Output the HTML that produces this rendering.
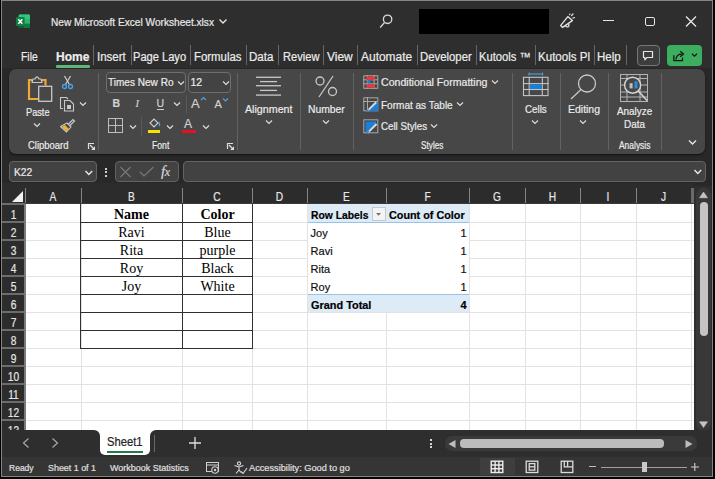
<!DOCTYPE html>
<html><head><meta charset="utf-8"><style>
html,body{margin:0;padding:0;width:715px;height:479px;overflow:hidden;background:#000}
.t{position:absolute;white-space:nowrap;-webkit-text-stroke:0.2px currentColor}
</style></head><body>
<div style="position:absolute;left:0px;top:0px;width:715px;height:479px;background:#000"></div>
<div style="position:absolute;left:1px;top:0px;width:712px;height:477px;background:#2e2e2e;box-sizing:border-box;border:1px solid #858585"></div>
<svg style="position:absolute;left:15px;top:13px;" width="17" height="17" viewBox="0 0 17 17"><rect x="3.7" y="1.5" width="11.2" height="13.6" rx="1.2" fill="#21a366"/><path d="M3.7 6 V2.7 Q3.7 1.5 4.9 1.5 H13.7 Q14.9 1.5 14.9 2.7 V6 Z" fill="#33c481"/><path d="M3.7 10.8 V13.9 Q3.7 15.1 4.9 15.1 H13.7 Q14.9 15.1 14.9 13.9 V10.8 Z" fill="#185c37"/><rect x="9" y="6" width="5.9" height="4.8" fill="#2ab573"/><path d="M9 10.8 H14.9 V13.9 Q14.9 15.1 13.7 15.1 H9 Z" fill="#107c41"/><rect x="1" y="4" width="8.6" height="9" rx="1" fill="#107c41"/><path d="M3.3 6.2 L7.3 10.8 M7.3 6.2 L3.3 10.8" stroke="#fff" stroke-width="1.5"/></svg>
<div class="t" style="left:50.6px;top:18px;font-size:10px;line-height:10px;color:#e8e8e8;font-weight:normal;font-family:'Liberation Sans', sans-serif;transform:scaleX(1.0126);transform-origin:left;">New Microsoft Excel Worksheet.xlsx</div>
<svg style="position:absolute;left:218px;top:18px;" width="10" height="7" viewBox="0 0 10 7"><polyline points="1.5,1.5 5,5 8.5,1.5" fill="none" stroke="#e6e6e6" stroke-width="1.4"/></svg>
<svg style="position:absolute;left:378px;top:13px;" width="16" height="17" viewBox="0 0 16 17"><circle cx="9.6" cy="6.3" r="4.2" fill="none" stroke="#dcdcdc" stroke-width="1.3"/><line x1="6.6" y1="9.4" x2="2.2" y2="14.5" stroke="#dcdcdc" stroke-width="1.3"/></svg>
<div style="position:absolute;left:419px;top:9px;width:130px;height:25px;background:#000"></div>
<svg style="position:absolute;left:557px;top:13px;" width="19" height="17" viewBox="0 0 19 17"><g fill="none" stroke="#e6e6e6" stroke-width="1.3" stroke-linejoin="round" stroke-linecap="round"><path d="M3.6 12.6 L10.8 3.6 L15.4 7.6 L5.6 14.4 Z"/><path d="M8.6 12.6 A1.7 1.7 0 1 0 11.6 11.2"/><line x1="14.6" y1="2.6" x2="16" y2="0.9"/><line x1="16" y1="5" x2="17.4" y2="4.6"/><line x1="12.6" y1="1.6" x2="12.8" y2="1.2"/></g></svg>
<div style="position:absolute;left:603px;top:20px;width:11px;height:1.3px;background:#e6e6e6"></div>
<div style="position:absolute;left:645px;top:16.5px;width:10px;height:9.5px;border:1.3px solid #e6e6e6;border-radius:2px;box-sizing:border-box"></div>
<svg style="position:absolute;left:685px;top:16px;" width="12" height="11" viewBox="0 0 12 11"><path d="M1 0.5 L11 10.5 M11 0.5 L1 10.5" stroke="#e6e6e6" stroke-width="1.3"/></svg>
<div class="t" style="left:21px;top:51px;font-size:12px;line-height:12px;color:#ececec;font-weight:normal;font-family:'Liberation Sans', sans-serif;transform:scaleX(0.8636);transform-origin:left;">File</div>
<div class="t" style="left:56px;top:51px;font-size:12px;line-height:12px;color:#ececec;font-weight:bold;font-family:'Liberation Sans', sans-serif;transform:scaleX(1.0018);transform-origin:left;">Home</div>
<div class="t" style="left:97px;top:51px;font-size:12px;line-height:12px;color:#ececec;font-weight:normal;font-family:'Liberation Sans', sans-serif;transform:scaleX(0.9596);transform-origin:left;">Insert</div>
<div class="t" style="left:133.4px;top:51px;font-size:12px;line-height:12px;color:#ececec;font-weight:normal;font-family:'Liberation Sans', sans-serif;transform:scaleX(0.9254);transform-origin:left;">Page Layo</div>
<div class="t" style="left:193.5px;top:51px;font-size:12px;line-height:12px;color:#ececec;font-weight:normal;font-family:'Liberation Sans', sans-serif;transform:scaleX(0.9498);transform-origin:left;">Formulas</div>
<div class="t" style="left:249.4px;top:51px;font-size:12px;line-height:12px;color:#ececec;font-weight:normal;font-family:'Liberation Sans', sans-serif;transform:scaleX(0.9626);transform-origin:left;">Data</div>
<div class="t" style="left:282.6px;top:51px;font-size:12px;line-height:12px;color:#ececec;font-weight:normal;font-family:'Liberation Sans', sans-serif;transform:scaleX(0.9251);transform-origin:left;">Review</div>
<div class="t" style="left:327.3px;top:51px;font-size:12px;line-height:12px;color:#ececec;font-weight:normal;font-family:'Liberation Sans', sans-serif;transform:scaleX(0.9963);transform-origin:left;">View</div>
<div class="t" style="left:360.9px;top:51px;font-size:12px;line-height:12px;color:#ececec;font-weight:normal;font-family:'Liberation Sans', sans-serif;transform:scaleX(0.9968);transform-origin:left;">Automate</div>
<div class="t" style="left:420px;top:51px;font-size:12px;line-height:12px;color:#ececec;font-weight:normal;font-family:'Liberation Sans', sans-serif;transform:scaleX(0.9470);transform-origin:left;">Developer</div>
<div class="t" style="left:478.8px;top:51px;font-size:12px;line-height:12px;color:#ececec;font-weight:normal;font-family:'Liberation Sans', sans-serif;transform:scaleX(0.9339);transform-origin:left;">Kutools ™</div>
<div class="t" style="left:537.9px;top:51px;font-size:12px;line-height:12px;color:#ececec;font-weight:normal;font-family:'Liberation Sans', sans-serif;transform:scaleX(0.9643);transform-origin:left;">Kutools Pl</div>
<div class="t" style="left:597.3px;top:51px;font-size:12px;line-height:12px;color:#ececec;font-weight:normal;font-family:'Liberation Sans', sans-serif;transform:scaleX(0.9603);transform-origin:left;">Help</div>
<div style="position:absolute;left:56px;top:65px;width:33.5px;height:2.5px;background:#5fb57a;border-radius:1px"></div>
<div style="position:absolute;left:92.5px;top:45px;width:1px;height:20px;background:#666"></div>
<div style="position:absolute;left:130.5px;top:45px;width:1px;height:20px;background:#666"></div>
<div style="position:absolute;left:189.5px;top:45px;width:1px;height:20px;background:#666"></div>
<div style="position:absolute;left:245.5px;top:45px;width:1px;height:20px;background:#666"></div>
<div style="position:absolute;left:277.5px;top:45px;width:1px;height:20px;background:#666"></div>
<div style="position:absolute;left:323px;top:45px;width:1px;height:20px;background:#666"></div>
<div style="position:absolute;left:356.5px;top:45px;width:1px;height:20px;background:#666"></div>
<div style="position:absolute;left:416.5px;top:45px;width:1px;height:20px;background:#666"></div>
<div style="position:absolute;left:475.5px;top:45px;width:1px;height:20px;background:#666"></div>
<div style="position:absolute;left:535px;top:45px;width:1px;height:20px;background:#666"></div>
<div style="position:absolute;left:593.5px;top:45px;width:1px;height:20px;background:#666"></div>
<div style="position:absolute;left:625.5px;top:45px;width:1px;height:20px;background:#666"></div>
<div style="position:absolute;left:637px;top:45px;width:23px;height:21px;border:1.2px solid #777;border-radius:4px;box-sizing:border-box;background:#3d3d3d"></div>
<svg style="position:absolute;left:642px;top:50px;" width="13" height="12" viewBox="0 0 13 12"><path d="M1.5 1.5 H10.5 V7.5 H5 L2.8 9.8 V7.5 H1.5 Z" fill="none" stroke="#e6e6e6" stroke-width="1.2" stroke-linejoin="round"/></svg>
<div style="position:absolute;left:666.5px;top:45px;width:35.5px;height:21px;background:#3dad5f;border-radius:4px"></div>
<svg style="position:absolute;left:672px;top:49px;" width="14" height="13" viewBox="0 0 14 13"><g fill="none" stroke="#151515" stroke-width="1.25" stroke-linejoin="round" stroke-linecap="round"><path d="M1.8 6.5 V11.5 H10.5 V9"/><path d="M4 10 C4.3 6.8 6.5 5 9.8 5"/><path d="M8.5 2.6 L11.6 5 L8.5 7.4"/></g></svg>
<svg style="position:absolute;left:691px;top:52px;" width="7" height="6" viewBox="0 0 7 6"><polyline points="1,1.8 3.5,4.2 6,1.8" fill="none" stroke="#151515" stroke-width="1.2"/></svg>
<div style="position:absolute;left:2px;top:68px;width:710px;height:118px;background:#282828"></div>
<div style="position:absolute;left:9px;top:68.5px;width:696px;height:85.5px;background:#474747;border-radius:7px;box-shadow:0 1px 2px rgba(0,0,0,0.6)"></div>
<div style="position:absolute;left:98px;top:73px;width:1px;height:77px;background:#626262"></div>
<div style="position:absolute;left:237px;top:73px;width:1px;height:77px;background:#626262"></div>
<div style="position:absolute;left:300px;top:73px;width:1px;height:77px;background:#626262"></div>
<div style="position:absolute;left:352.5px;top:73px;width:1px;height:77px;background:#626262"></div>
<div style="position:absolute;left:511.5px;top:73px;width:1px;height:77px;background:#626262"></div>
<div style="position:absolute;left:560px;top:73px;width:1px;height:77px;background:#626262"></div>
<div style="position:absolute;left:607.5px;top:73px;width:1px;height:77px;background:#626262"></div>
<div style="position:absolute;left:661px;top:73px;width:1px;height:77px;background:#626262"></div>
<svg style="position:absolute;left:26px;top:74px;" width="28" height="29" viewBox="0 0 28 29"><path d="M6.5 6 H3 V25 H12.5" fill="none" stroke="#f0a830" stroke-width="2.2"/><path d="M15.5 6 H19.5 V11.5" fill="none" stroke="#f0a830" stroke-width="2.2"/><path d="M6 8.5 L7 5 H9 Q11 0.8 13 5 H15 L16 8.5 Z" fill="#474747" stroke="#c8c8c8" stroke-width="1.2" stroke-linejoin="round"/><rect x="12.7" y="12.3" width="13" height="15" fill="#474747" stroke="#c8c8c8" stroke-width="1.3"/></svg>
<div class="t" style="left:26px;top:107px;font-size:10.5px;line-height:10.5px;color:#ebebeb;font-weight:normal;font-family:'Liberation Sans', sans-serif;transform:scaleX(0.8752);transform-origin:left;">Paste</div>
<svg style="position:absolute;left:33px;top:122px;" width="8" height="6" viewBox="0 0 8 6"><polyline points="1,1.5 4,4.5 7,1.5" fill="none" stroke="#dcdcdc" stroke-width="1.2"/></svg>
<svg style="position:absolute;left:61px;top:75px;" width="13" height="15" viewBox="0 0 13 15"><line x1="3.5" y1="1" x2="8.5" y2="9.5" stroke="#d8d8d8" stroke-width="1.1"/><line x1="9.5" y1="1" x2="4.5" y2="9.5" stroke="#d8d8d8" stroke-width="1.1"/><circle cx="3.5" cy="11.5" r="2" fill="none" stroke="#4aa3e8" stroke-width="1.3"/><circle cx="9.5" cy="11.5" r="2" fill="none" stroke="#4aa3e8" stroke-width="1.3"/></svg>
<svg style="position:absolute;left:59px;top:96px;" width="17" height="16" viewBox="0 0 17 16"><path d="M4 12.5 H1.5 V1.5 H7.5 L9 3" fill="none" stroke="#c8c8c8" stroke-width="1.1"/><path d="M5.5 4.5 H11 L14.5 8 V15 H5.5 Z" fill="none" stroke="#c8c8c8" stroke-width="1.1"/><rect x="8" y="9" width="4" height="4" fill="#c8c8c8"/></svg>
<svg style="position:absolute;left:79px;top:101px;" width="8" height="6" viewBox="0 0 8 6"><polyline points="1,1.5 4,4.5 7,1.5" fill="none" stroke="#dcdcdc" stroke-width="1.2"/></svg>
<svg style="position:absolute;left:59px;top:118px;" width="17" height="15" viewBox="0 0 17 15"><path d="M9.5 6 L14 1.5 L15.5 3 L11 7.5" fill="none" stroke="#c8c8c8" stroke-width="1.2"/><path d="M1.5 8.5 L8 5 L12 9 L7.5 14 Z" fill="none" stroke="#c8c8c8" stroke-width="1.1" stroke-linejoin="round"/><path d="M2.5 9 L6 7 L10.5 11.5 L7.5 13 Z" fill="#f0b030"/></svg>
<div class="t" style="left:27.7px;top:141px;font-size:10px;line-height:10px;color:#ebebeb;font-weight:normal;font-family:'Liberation Sans', sans-serif;transform:scaleX(0.9462);transform-origin:left;">Clipboard</div>
<svg style="position:absolute;left:87px;top:142px;" width="9" height="9" viewBox="0 0 9 9"><path d="M1.5 7 V1.5 H7" fill="none" stroke="#e0e0e0" stroke-width="1.2"/><line x1="3" y1="3" x2="6.5" y2="6.5" stroke="#e0e0e0" stroke-width="1.2"/><polygon points="8,4.2 8,8 4.2,8" fill="#e0e0e0"/></svg>
<div style="position:absolute;left:105.5px;top:71.5px;width:80.5px;height:21px;border:1px solid #6e6e6e;border-radius:4px;box-sizing:border-box;background:#434343"></div>
<div class="t" style="left:108px;top:77px;font-size:10.5px;line-height:10.5px;color:#ebebeb;font-weight:normal;font-family:'Liberation Sans', sans-serif;transform:scaleX(0.9568);transform-origin:left;">Times New Ro</div>
<svg style="position:absolute;left:177px;top:79.5px;" width="8" height="6" viewBox="0 0 8 6"><polyline points="1,1.5 4,4.5 7,1.5" fill="none" stroke="#dcdcdc" stroke-width="1.2"/></svg>
<div style="position:absolute;left:188px;top:71.5px;width:43px;height:21px;border:1px solid #6e6e6e;border-radius:4px;box-sizing:border-box;background:#434343"></div>
<div class="t" style="left:190.5px;top:77px;font-size:10.5px;line-height:10.5px;color:#ebebeb;font-weight:normal;font-family:'Liberation Sans', sans-serif;">12</div>
<svg style="position:absolute;left:221.5px;top:79.5px;" width="8" height="6" viewBox="0 0 8 6"><polyline points="1,1.5 4,4.5 7,1.5" fill="none" stroke="#dcdcdc" stroke-width="1.2"/></svg>
<div class="t" style="left:112.5px;top:98px;font-size:10.5px;line-height:10.5px;color:#d0d0d0;font-weight:bold;font-family:'Liberation Sans', sans-serif;">B</div>
<div class="t" style="left:135.5px;top:99px;font-size:10.5px;line-height:10.5px;color:#d0d0d0;font-weight:normal;font-family:'Liberation Serif', serif;font-style:italic;">I</div>
<div class="t" style="left:156.5px;top:98px;font-size:10.5px;line-height:10.5px;color:#d0d0d0;font-weight:normal;font-family:'Liberation Sans', sans-serif;">U</div>
<div style="position:absolute;left:156.5px;top:109px;width:7.5px;height:1px;background:#d0d0d0"></div>
<svg style="position:absolute;left:172.5px;top:101px;" width="8" height="6" viewBox="0 0 8 6"><polyline points="1,1.5 4,4.5 7,1.5" fill="none" stroke="#dcdcdc" stroke-width="1.2"/></svg>
<div style="position:absolute;left:185.5px;top:94.5px;width:1px;height:19.5px;background:#5a5a5a"></div>
<div class="t" style="left:191px;top:97px;font-size:13px;line-height:13px;color:#d0d0d0;font-weight:normal;font-family:'Liberation Sans', sans-serif;font-weight:normal;">A</div>
<svg style="position:absolute;left:200px;top:96px;" width="7" height="5" viewBox="0 0 7 5"><polyline points="1,4 3.5,1.5 6,4" fill="none" stroke="#4aa3e8" stroke-width="1.2"/></svg>
<div class="t" style="left:214.5px;top:99px;font-size:11px;line-height:11px;color:#d0d0d0;font-weight:normal;font-family:'Liberation Sans', sans-serif;">A</div>
<svg style="position:absolute;left:222px;top:97px;" width="7" height="5" viewBox="0 0 7 5"><polyline points="1,1.5 3.5,4 6,1.5" fill="none" stroke="#4aa3e8" stroke-width="1.2"/></svg>
<svg style="position:absolute;left:108px;top:118px;" width="15" height="15" viewBox="0 0 15 15"><rect x="0.5" y="0.5" width="14" height="14" fill="none" stroke="#bdbdbd" stroke-width="1"/><line x1="7.5" y1="0" x2="7.5" y2="15" stroke="#bdbdbd"/><line x1="0" y1="7.5" x2="15" y2="7.5" stroke="#bdbdbd"/></svg>
<svg style="position:absolute;left:128.5px;top:124px;" width="8" height="6" viewBox="0 0 8 6"><polyline points="1,1.5 4,4.5 7,1.5" fill="none" stroke="#dcdcdc" stroke-width="1.2"/></svg>
<div style="position:absolute;left:141px;top:116.5px;width:1px;height:19px;background:#5a5a5a"></div>
<svg style="position:absolute;left:147px;top:117px;" width="15" height="13" viewBox="0 0 15 13"><path d="M3 6 L7 2 L11 6 L7 10 Z" fill="none" stroke="#d0d0d0" stroke-width="1.1"/><path d="M11.5 5 Q13.5 8 12 9" fill="none" stroke="#4aa3e8" stroke-width="1.4"/></svg>
<div style="position:absolute;left:148px;top:129.5px;width:12px;height:3px;background:#f5e400"></div>
<svg style="position:absolute;left:166px;top:124px;" width="8" height="6" viewBox="0 0 8 6"><polyline points="1,1.5 4,4.5 7,1.5" fill="none" stroke="#dcdcdc" stroke-width="1.2"/></svg>
<div class="t" style="left:184px;top:118px;font-size:12px;line-height:12px;color:#d0d0d0;font-weight:normal;font-family:'Liberation Sans', sans-serif;">A</div>
<div style="position:absolute;left:182px;top:129.5px;width:14px;height:3px;background:#e81123"></div>
<svg style="position:absolute;left:202px;top:124px;" width="8" height="6" viewBox="0 0 8 6"><polyline points="1,1.5 4,4.5 7,1.5" fill="none" stroke="#dcdcdc" stroke-width="1.2"/></svg>
<div class="t" style="left:152px;top:141px;font-size:10px;line-height:10px;color:#ebebeb;font-weight:normal;font-family:'Liberation Sans', sans-serif;transform:scaleX(0.8646);transform-origin:left;">Font</div>
<svg style="position:absolute;left:226px;top:142px;" width="9" height="9" viewBox="0 0 9 9"><path d="M1.5 7 V1.5 H7" fill="none" stroke="#e0e0e0" stroke-width="1.2"/><line x1="3" y1="3" x2="6.5" y2="6.5" stroke="#e0e0e0" stroke-width="1.2"/><polygon points="8,4.2 8,8 4.2,8" fill="#e0e0e0"/></svg>
<svg style="position:absolute;left:255px;top:76px;" width="28" height="21" viewBox="0 0 28 21"><g stroke="#c8c8c8" stroke-width="1.3"><line x1="1" y1="1.3" x2="26" y2="1.3"/><line x1="5" y1="5.6" x2="22" y2="5.6"/><line x1="1" y1="9.7" x2="26" y2="9.7"/><line x1="5" y1="14.4" x2="22" y2="14.4"/><line x1="1" y1="19.1" x2="26" y2="19.1"/></g></svg>
<div class="t" style="left:244.5px;top:104px;font-size:11px;line-height:11px;color:#ebebeb;font-weight:normal;font-family:'Liberation Sans', sans-serif;transform:scaleX(0.9710);transform-origin:left;">Alignment</div>
<svg style="position:absolute;left:264.5px;top:119px;" width="8" height="6" viewBox="0 0 8 6"><polyline points="1,1.5 4,4.5 7,1.5" fill="none" stroke="#dcdcdc" stroke-width="1.2"/></svg>
<svg style="position:absolute;left:314px;top:75px;" width="25" height="23" viewBox="0 0 25 23"><circle cx="6" cy="6" r="4" fill="none" stroke="#c8c8c8" stroke-width="1.3"/><circle cx="18.5" cy="16.5" r="4" fill="none" stroke="#c8c8c8" stroke-width="1.3"/><line x1="19" y1="1" x2="5" y2="22" stroke="#c8c8c8" stroke-width="1.3"/></svg>
<div class="t" style="left:307.7px;top:104px;font-size:11px;line-height:11px;color:#ebebeb;font-weight:normal;font-family:'Liberation Sans', sans-serif;transform:scaleX(0.9406);transform-origin:left;">Number</div>
<svg style="position:absolute;left:322px;top:119px;" width="8" height="6" viewBox="0 0 8 6"><polyline points="1,1.5 4,4.5 7,1.5" fill="none" stroke="#dcdcdc" stroke-width="1.2"/></svg>
<svg style="position:absolute;left:363px;top:75px;" width="16" height="14" viewBox="0 0 16 14"><g stroke="#a8a8a8" stroke-width="1" fill="none"><rect x="0.8" y="0.8" width="14" height="12.5"/><line x1="4.3" y1="0" x2="4.3" y2="14"/><line x1="11" y1="0" x2="11" y2="14"/><line x1="0" y1="4.8" x2="15" y2="4.8"/><line x1="0" y1="8.8" x2="15" y2="8.8"/></g><rect x="3.5" y="1.5" width="8" height="3.5" fill="#e8383d"/><rect x="3.5" y="9.2" width="8" height="3.6" fill="#e8383d"/><rect x="4.5" y="5.3" width="3" height="3" fill="#1a7fd8"/></svg>
<div class="t" style="left:381px;top:77px;font-size:10.5px;line-height:10.5px;color:#ebebeb;font-weight:normal;font-family:'Liberation Sans', sans-serif;transform:scaleX(1.0072);transform-origin:left;">Conditional Formatting</div>
<svg style="position:absolute;left:490.5px;top:79px;" width="8" height="6" viewBox="0 0 8 6"><polyline points="1,1.5 4,4.5 7,1.5" fill="none" stroke="#dcdcdc" stroke-width="1.2"/></svg>
<svg style="position:absolute;left:363px;top:97px;" width="16" height="15" viewBox="0 0 16 15"><g stroke="#a8a8a8" stroke-width="1" fill="none"><rect x="0.8" y="0.8" width="14" height="13"/><line x1="0" y1="4.5" x2="15" y2="4.5"/><line x1="4.5" y1="0" x2="4.5" y2="14"/></g><path d="M5 14 L15 4.5 V14 Z" fill="#1a7fd8"/><path d="M3.5 13.5 L12.5 4.5 L14 6 L5 14.5 Z" fill="#d8d8d8"/><path d="M3.5 13.5 L5 12 L6 13 L4.5 14.5 Z" fill="#1a7fd8"/></svg>
<div class="t" style="left:381px;top:100px;font-size:10.5px;line-height:10.5px;color:#ebebeb;font-weight:normal;font-family:'Liberation Sans', sans-serif;transform:scaleX(0.9548);transform-origin:left;">Format as Table</div>
<svg style="position:absolute;left:456px;top:101px;" width="8" height="6" viewBox="0 0 8 6"><polyline points="1,1.5 4,4.5 7,1.5" fill="none" stroke="#dcdcdc" stroke-width="1.2"/></svg>
<svg style="position:absolute;left:363px;top:119px;" width="16" height="15" viewBox="0 0 16 15"><g stroke="#a8a8a8" stroke-width="1" fill="none"><rect x="0.8" y="0.8" width="14" height="13"/></g><path d="M2.5 2.5 H13 V5 L4 13 H2.5 Z" fill="#1a7fd8"/><path d="M3.8 13.3 L12.8 4.3 L14.3 5.8 L5.3 14.5 Z" fill="#d8d8d8"/><path d="M3.8 13.3 L5.3 11.8 L6.3 12.8 L4.8 14.3 Z" fill="#1a7fd8"/></svg>
<div class="t" style="left:381px;top:121px;font-size:10.5px;line-height:10.5px;color:#ebebeb;font-weight:normal;font-family:'Liberation Sans', sans-serif;transform:scaleX(0.9274);transform-origin:left;">Cell Styles</div>
<svg style="position:absolute;left:430px;top:123px;" width="8" height="6" viewBox="0 0 8 6"><polyline points="1,1.5 4,4.5 7,1.5" fill="none" stroke="#dcdcdc" stroke-width="1.2"/></svg>
<div class="t" style="left:421px;top:141px;font-size:10px;line-height:10px;color:#ebebeb;font-weight:normal;font-family:'Liberation Sans', sans-serif;transform:scaleX(0.8226);transform-origin:left;">Styles</div>
<svg style="position:absolute;left:522px;top:72px;" width="28" height="25" viewBox="0 0 28 25"><g stroke="#4aa3e8" stroke-width="1.1"><line x1="7" y1="2" x2="20.5" y2="2"/><line x1="7" y1="0.5" x2="7" y2="3.5"/><line x1="20.5" y1="0.5" x2="20.5" y2="3.5"/></g><g stroke="#c4c4c4" stroke-width="1.1" fill="none"><rect x="1.5" y="5.3" width="24.5" height="18.3"/><line x1="1" y1="11.6" x2="26.5" y2="11.6"/><line x1="1" y1="17.5" x2="26.5" y2="17.5"/><line x1="7.2" y1="5" x2="7.2" y2="24"/><line x1="20.3" y1="5" x2="20.3" y2="24"/></g><rect x="7.8" y="12.2" width="11.9" height="4.8" fill="#1a7fd8"/></svg>
<div class="t" style="left:525px;top:104px;font-size:10.5px;line-height:10.5px;color:#ebebeb;font-weight:normal;font-family:'Liberation Sans', sans-serif;transform:scaleX(0.9298);transform-origin:left;">Cells</div>
<svg style="position:absolute;left:531px;top:119px;" width="8" height="6" viewBox="0 0 8 6"><polyline points="1,1.5 4,4.5 7,1.5" fill="none" stroke="#dcdcdc" stroke-width="1.2"/></svg>
<svg style="position:absolute;left:569px;top:73px;" width="30" height="28" viewBox="0 0 30 28"><circle cx="18" cy="10.5" r="8.5" fill="none" stroke="#c8c8c8" stroke-width="1.3"/><line x1="12" y1="16.5" x2="2" y2="26" stroke="#c8c8c8" stroke-width="1.3"/></svg>
<div class="t" style="left:567.6px;top:104px;font-size:10.5px;line-height:10.5px;color:#ebebeb;font-weight:normal;font-family:'Liberation Sans', sans-serif;transform:scaleX(0.9967);transform-origin:left;">Editing</div>
<svg style="position:absolute;left:579px;top:119px;" width="8" height="6" viewBox="0 0 8 6"><polyline points="1,1.5 4,4.5 7,1.5" fill="none" stroke="#dcdcdc" stroke-width="1.2"/></svg>
<svg style="position:absolute;left:619px;top:73px;" width="31" height="30" viewBox="0 0 31 30"><g stroke="#b4b4b4" stroke-width="1" fill="none"><rect x="1.5" y="1.5" width="27" height="27"/><line x1="1" y1="5.5" x2="29" y2="5.5"/><line x1="1" y1="12" x2="29" y2="12"/><line x1="1" y1="19" x2="29" y2="19"/><line x1="1" y1="24" x2="29" y2="24"/><line x1="8" y1="1" x2="8" y2="29"/><line x1="21" y1="1" x2="21" y2="29"/></g><circle cx="13.6" cy="12.2" r="8" fill="#474747" stroke="#d6d6d6" stroke-width="1.4"/><line x1="19.3" y1="17.9" x2="28" y2="27.5" stroke="#d6d6d6" stroke-width="1.5"/><rect x="10.6" y="10.2" width="3" height="5.2" fill="#c0c0c0"/><rect x="15.5" y="8.2" width="3" height="7.2" fill="#2f8de0"/></svg>
<div class="t" style="left:616.6px;top:106px;font-size:10.5px;line-height:10.5px;color:#ebebeb;font-weight:normal;font-family:'Liberation Sans', sans-serif;transform:scaleX(0.9423);transform-origin:left;">Analyze</div>
<div class="t" style="left:624px;top:119px;font-size:10.5px;line-height:10.5px;color:#ebebeb;font-weight:normal;font-family:'Liberation Sans', sans-serif;transform:scaleX(0.9468);transform-origin:left;">Data</div>
<div class="t" style="left:619px;top:141px;font-size:10px;line-height:10px;color:#ebebeb;font-weight:normal;font-family:'Liberation Sans', sans-serif;transform:scaleX(0.8432);transform-origin:left;">Analysis</div>
<svg style="position:absolute;left:688px;top:139px;" width="10" height="7" viewBox="0 0 10 7"><polyline points="1,1.5 4.5,5 8,1.5" fill="none" stroke="#e6e6e6" stroke-width="1.4"/></svg>
<div style="position:absolute;left:9px;top:161px;width:88px;height:21px;border:1.5px solid #636363;border-radius:4px;box-sizing:border-box;background:#424242"></div>
<div class="t" style="left:14px;top:167px;font-size:10.5px;line-height:10.5px;color:#ebebeb;font-weight:normal;font-family:'Liberation Sans', sans-serif;transform:scaleX(0.9741);transform-origin:left;">K22</div>
<svg style="position:absolute;left:83.5px;top:168.5px;" width="10" height="8" viewBox="0 0 10 8"><polyline points="1.5,2 4.8,5.5 8.2,2" fill="none" stroke="#e6e6e6" stroke-width="1.5"/></svg>
<div style="position:absolute;left:104.8px;top:167.5px;width:2px;height:2px;background:#cfcfcf"></div>
<div style="position:absolute;left:104.8px;top:171px;width:2px;height:2px;background:#cfcfcf"></div>
<div style="position:absolute;left:104.8px;top:174.5px;width:2px;height:2px;background:#cfcfcf"></div>
<div style="position:absolute;left:114.5px;top:161px;width:64px;height:21px;border:1.5px solid #636363;border-radius:4px;box-sizing:border-box;background:#424242"></div>
<svg style="position:absolute;left:119px;top:166px;" width="14" height="12" viewBox="0 0 14 12"><path d="M1.5 1 L11.5 11 M11.5 1 L1.5 11" stroke="#7a7a7a" stroke-width="1.1"/></svg>
<svg style="position:absolute;left:139px;top:166px;" width="16" height="12" viewBox="0 0 16 12"><polyline points="1,6 5,10 14.5,1" fill="none" stroke="#7a7a7a" stroke-width="1.1"/></svg>
<div class="t" style="left:161px;top:164px;font-size:15px;line-height:15px;color:#d6d6d6;font-weight:normal;font-family:'Liberation Serif', serif;font-style:italic;letter-spacing:-0.5px;">f<span style="font-size:12px">x</span></div>
<div style="position:absolute;left:182.5px;top:161px;width:523px;height:21px;border:1.5px solid #636363;border-radius:4px;box-sizing:border-box;background:#424242"></div>
<svg style="position:absolute;left:692.5px;top:167.5px;" width="10" height="8" viewBox="0 0 10 8"><polyline points="1.5,2 4.8,5.5 8.2,2" fill="none" stroke="#e6e6e6" stroke-width="1.5"/></svg>
<div style="position:absolute;left:2px;top:183px;width:692px;height:21px;background:#2c2c2c"></div>
<div style="position:absolute;left:2px;top:204px;width:23px;height:226px;background:#2c2c2c"></div>
<div style="position:absolute;left:25px;top:204px;width:669px;height:226px;background:#fff"></div>
<div style="position:absolute;left:25px;top:222px;width:669px;height:1px;background:#e2e2e2"></div>
<div style="position:absolute;left:25px;top:240px;width:669px;height:1px;background:#e2e2e2"></div>
<div style="position:absolute;left:25px;top:258px;width:669px;height:1px;background:#e2e2e2"></div>
<div style="position:absolute;left:25px;top:276px;width:669px;height:1px;background:#e2e2e2"></div>
<div style="position:absolute;left:25px;top:294px;width:669px;height:1px;background:#e2e2e2"></div>
<div style="position:absolute;left:25px;top:312px;width:669px;height:1px;background:#e2e2e2"></div>
<div style="position:absolute;left:25px;top:330px;width:669px;height:1px;background:#e2e2e2"></div>
<div style="position:absolute;left:25px;top:348px;width:669px;height:1px;background:#e2e2e2"></div>
<div style="position:absolute;left:25px;top:366px;width:669px;height:1px;background:#e2e2e2"></div>
<div style="position:absolute;left:25px;top:384px;width:669px;height:1px;background:#e2e2e2"></div>
<div style="position:absolute;left:25px;top:402px;width:669px;height:1px;background:#e2e2e2"></div>
<div style="position:absolute;left:25px;top:420px;width:669px;height:1px;background:#e2e2e2"></div>
<div style="position:absolute;left:81px;top:204px;width:1px;height:226px;background:#e2e2e2"></div>
<div style="position:absolute;left:182px;top:204px;width:1px;height:226px;background:#e2e2e2"></div>
<div style="position:absolute;left:252px;top:204px;width:1px;height:226px;background:#e2e2e2"></div>
<div style="position:absolute;left:307px;top:204px;width:1px;height:226px;background:#e2e2e2"></div>
<div style="position:absolute;left:386px;top:204px;width:1px;height:226px;background:#e2e2e2"></div>
<div style="position:absolute;left:469px;top:204px;width:1px;height:226px;background:#e2e2e2"></div>
<div style="position:absolute;left:525px;top:204px;width:1px;height:226px;background:#e2e2e2"></div>
<div style="position:absolute;left:580px;top:204px;width:1px;height:226px;background:#e2e2e2"></div>
<div style="position:absolute;left:636px;top:204px;width:1px;height:226px;background:#e2e2e2"></div>
<div style="position:absolute;left:691px;top:204px;width:1px;height:226px;background:#e2e2e2"></div>
<div style="position:absolute;left:25px;top:188px;width:1px;height:16px;background:#858585"></div>
<div style="position:absolute;left:81px;top:188px;width:1px;height:16px;background:#858585"></div>
<div style="position:absolute;left:182px;top:188px;width:1px;height:16px;background:#858585"></div>
<div style="position:absolute;left:252px;top:188px;width:1px;height:16px;background:#858585"></div>
<div style="position:absolute;left:307px;top:188px;width:1px;height:16px;background:#858585"></div>
<div style="position:absolute;left:386px;top:188px;width:1px;height:16px;background:#858585"></div>
<div style="position:absolute;left:469px;top:188px;width:1px;height:16px;background:#858585"></div>
<div style="position:absolute;left:525px;top:188px;width:1px;height:16px;background:#858585"></div>
<div style="position:absolute;left:580px;top:188px;width:1px;height:16px;background:#858585"></div>
<div style="position:absolute;left:636px;top:188px;width:1px;height:16px;background:#858585"></div>
<div style="position:absolute;left:691px;top:188px;width:1px;height:16px;background:#858585"></div>
<div style="position:absolute;left:691px;top:188px;width:3px;height:16px;background:#6a6a6a"></div>
<div style="position:absolute;left:25px;top:203px;width:669px;height:1px;background:#3a3a3a"></div>
<div style="position:absolute;left:2px;top:203px;width:23px;height:2px;background:#6c6c6c"></div>
<div style="position:absolute;left:2px;top:221px;width:23px;height:2px;background:#6c6c6c"></div>
<div style="position:absolute;left:2px;top:239px;width:23px;height:2px;background:#6c6c6c"></div>
<div style="position:absolute;left:2px;top:257px;width:23px;height:2px;background:#6c6c6c"></div>
<div style="position:absolute;left:2px;top:275px;width:23px;height:2px;background:#6c6c6c"></div>
<div style="position:absolute;left:2px;top:293px;width:23px;height:2px;background:#6c6c6c"></div>
<div style="position:absolute;left:2px;top:311px;width:23px;height:2px;background:#6c6c6c"></div>
<div style="position:absolute;left:2px;top:329px;width:23px;height:2px;background:#6c6c6c"></div>
<div style="position:absolute;left:2px;top:347px;width:23px;height:2px;background:#6c6c6c"></div>
<div style="position:absolute;left:2px;top:365px;width:23px;height:2px;background:#6c6c6c"></div>
<div style="position:absolute;left:2px;top:383px;width:23px;height:2px;background:#6c6c6c"></div>
<div style="position:absolute;left:2px;top:401px;width:23px;height:2px;background:#6c6c6c"></div>
<div style="position:absolute;left:2px;top:419px;width:23px;height:2px;background:#6c6c6c"></div>
<div style="position:absolute;left:24px;top:204px;width:1.5px;height:226px;background:#7a7a7a"></div>
<svg style="position:absolute;left:11px;top:190px;" width="13" height="13" viewBox="0 0 13 13"><polygon points="12,1 12,12 1,12" fill="#f2f2f2"/></svg>
<div class="t" style="left:24.5px;width:56px;text-align:center;top:191px;font-size:12px;line-height:12px;color:#e6e6e6;font-weight:normal;font-family:'Liberation Sans', sans-serif;transform:scaleX(0.8500);transform-origin:center;">A</div>
<div class="t" style="left:80.5px;width:101px;text-align:center;top:191px;font-size:12px;line-height:12px;color:#e6e6e6;font-weight:normal;font-family:'Liberation Sans', sans-serif;transform:scaleX(0.8500);transform-origin:center;">B</div>
<div class="t" style="left:181.5px;width:70px;text-align:center;top:191px;font-size:12px;line-height:12px;color:#e6e6e6;font-weight:normal;font-family:'Liberation Sans', sans-serif;transform:scaleX(0.8500);transform-origin:center;">C</div>
<div class="t" style="left:251.5px;width:55px;text-align:center;top:191px;font-size:12px;line-height:12px;color:#e6e6e6;font-weight:normal;font-family:'Liberation Sans', sans-serif;transform:scaleX(0.8500);transform-origin:center;">D</div>
<div class="t" style="left:306.5px;width:79px;text-align:center;top:191px;font-size:12px;line-height:12px;color:#e6e6e6;font-weight:normal;font-family:'Liberation Sans', sans-serif;transform:scaleX(0.8500);transform-origin:center;">E</div>
<div class="t" style="left:385.5px;width:83px;text-align:center;top:191px;font-size:12px;line-height:12px;color:#e6e6e6;font-weight:normal;font-family:'Liberation Sans', sans-serif;transform:scaleX(0.8500);transform-origin:center;">F</div>
<div class="t" style="left:468.5px;width:56px;text-align:center;top:191px;font-size:12px;line-height:12px;color:#e6e6e6;font-weight:normal;font-family:'Liberation Sans', sans-serif;transform:scaleX(0.8500);transform-origin:center;">G</div>
<div class="t" style="left:524.5px;width:55px;text-align:center;top:191px;font-size:12px;line-height:12px;color:#e6e6e6;font-weight:normal;font-family:'Liberation Sans', sans-serif;transform:scaleX(0.8500);transform-origin:center;">H</div>
<div class="t" style="left:579.5px;width:56px;text-align:center;top:191px;font-size:12px;line-height:12px;color:#e6e6e6;font-weight:normal;font-family:'Liberation Sans', sans-serif;transform:scaleX(0.8500);transform-origin:center;">I</div>
<div class="t" style="left:635.5px;width:55px;text-align:center;top:191px;font-size:12px;line-height:12px;color:#e6e6e6;font-weight:normal;font-family:'Liberation Sans', sans-serif;transform:scaleX(0.8500);transform-origin:center;">J</div>
<div class="t" style="left:2.0px;width:23px;text-align:center;top:209px;font-size:12px;line-height:12px;color:#e6e6e6;font-weight:normal;font-family:'Liberation Sans', sans-serif;transform:scaleX(0.8500);transform-origin:center;">1</div>
<div class="t" style="left:2.0px;width:23px;text-align:center;top:227px;font-size:12px;line-height:12px;color:#e6e6e6;font-weight:normal;font-family:'Liberation Sans', sans-serif;transform:scaleX(0.8500);transform-origin:center;">2</div>
<div class="t" style="left:2.0px;width:23px;text-align:center;top:245px;font-size:12px;line-height:12px;color:#e6e6e6;font-weight:normal;font-family:'Liberation Sans', sans-serif;transform:scaleX(0.8500);transform-origin:center;">3</div>
<div class="t" style="left:2.0px;width:23px;text-align:center;top:263px;font-size:12px;line-height:12px;color:#e6e6e6;font-weight:normal;font-family:'Liberation Sans', sans-serif;transform:scaleX(0.8500);transform-origin:center;">4</div>
<div class="t" style="left:2.0px;width:23px;text-align:center;top:281px;font-size:12px;line-height:12px;color:#e6e6e6;font-weight:normal;font-family:'Liberation Sans', sans-serif;transform:scaleX(0.8500);transform-origin:center;">5</div>
<div class="t" style="left:2.0px;width:23px;text-align:center;top:299px;font-size:12px;line-height:12px;color:#e6e6e6;font-weight:normal;font-family:'Liberation Sans', sans-serif;transform:scaleX(0.8500);transform-origin:center;">6</div>
<div class="t" style="left:2.0px;width:23px;text-align:center;top:317px;font-size:12px;line-height:12px;color:#e6e6e6;font-weight:normal;font-family:'Liberation Sans', sans-serif;transform:scaleX(0.8500);transform-origin:center;">7</div>
<div class="t" style="left:2.0px;width:23px;text-align:center;top:335px;font-size:12px;line-height:12px;color:#e6e6e6;font-weight:normal;font-family:'Liberation Sans', sans-serif;transform:scaleX(0.8500);transform-origin:center;">8</div>
<div class="t" style="left:2.0px;width:23px;text-align:center;top:353px;font-size:12px;line-height:12px;color:#e6e6e6;font-weight:normal;font-family:'Liberation Sans', sans-serif;transform:scaleX(0.8500);transform-origin:center;">9</div>
<div class="t" style="left:2.0px;width:23px;text-align:center;top:371px;font-size:12px;line-height:12px;color:#e6e6e6;font-weight:normal;font-family:'Liberation Sans', sans-serif;transform:scaleX(0.8500);transform-origin:center;">10</div>
<div class="t" style="left:2.0px;width:23px;text-align:center;top:389px;font-size:12px;line-height:12px;color:#e6e6e6;font-weight:normal;font-family:'Liberation Sans', sans-serif;transform:scaleX(0.8500);transform-origin:center;">11</div>
<div class="t" style="left:2.0px;width:23px;text-align:center;top:407px;font-size:12px;line-height:12px;color:#e6e6e6;font-weight:normal;font-family:'Liberation Sans', sans-serif;transform:scaleX(0.8500);transform-origin:center;">12</div>
<div class="t" style="left:2.0px;width:23px;text-align:center;top:425px;font-size:12px;line-height:12px;color:#e6e6e6;font-weight:normal;font-family:'Liberation Sans', sans-serif;transform:scaleX(0.8500);transform-origin:center;">13</div>
<div style="position:absolute;left:80px;top:222px;width:173px;height:1px;background:#303030"></div>
<div style="position:absolute;left:80px;top:240px;width:173px;height:1px;background:#303030"></div>
<div style="position:absolute;left:80px;top:258px;width:173px;height:1px;background:#303030"></div>
<div style="position:absolute;left:80px;top:276px;width:173px;height:1px;background:#303030"></div>
<div style="position:absolute;left:80px;top:294px;width:173px;height:1px;background:#303030"></div>
<div style="position:absolute;left:80px;top:312px;width:173px;height:1px;background:#303030"></div>
<div style="position:absolute;left:80px;top:330px;width:173px;height:1px;background:#303030"></div>
<div style="position:absolute;left:80px;top:348px;width:173px;height:1px;background:#303030"></div>
<div style="position:absolute;left:80px;top:204px;width:1px;height:145px;background:#303030"></div>
<div style="position:absolute;left:182px;top:204px;width:1px;height:145px;background:#303030"></div>
<div style="position:absolute;left:252px;top:204px;width:1px;height:145px;background:#303030"></div>
<div class="t" style="left:81.0px;width:101px;text-align:center;top:208px;font-size:14px;line-height:14px;color:#000;font-weight:bold;font-family:'Liberation Serif', serif;-webkit-text-stroke:0;">Name</div>
<div class="t" style="left:182.5px;width:70px;text-align:center;top:208px;font-size:14px;line-height:14px;color:#000;font-weight:bold;font-family:'Liberation Serif', serif;-webkit-text-stroke:0;">Color</div>
<div class="t" style="left:81.0px;width:101px;text-align:center;top:226px;font-size:14px;line-height:14px;color:#000;font-weight:normal;font-family:'Liberation Serif', serif;-webkit-text-stroke:0;">Ravi</div>
<div class="t" style="left:182.5px;width:70px;text-align:center;top:226px;font-size:14px;line-height:14px;color:#000;font-weight:normal;font-family:'Liberation Serif', serif;-webkit-text-stroke:0;">Blue</div>
<div class="t" style="left:81.0px;width:101px;text-align:center;top:244px;font-size:14px;line-height:14px;color:#000;font-weight:normal;font-family:'Liberation Serif', serif;-webkit-text-stroke:0;">Rita</div>
<div class="t" style="left:182.5px;width:70px;text-align:center;top:244px;font-size:14px;line-height:14px;color:#000;font-weight:normal;font-family:'Liberation Serif', serif;-webkit-text-stroke:0;">purple</div>
<div class="t" style="left:81.0px;width:101px;text-align:center;top:262px;font-size:14px;line-height:14px;color:#000;font-weight:normal;font-family:'Liberation Serif', serif;-webkit-text-stroke:0;">Roy</div>
<div class="t" style="left:182.5px;width:70px;text-align:center;top:262px;font-size:14px;line-height:14px;color:#000;font-weight:normal;font-family:'Liberation Serif', serif;-webkit-text-stroke:0;">Black</div>
<div class="t" style="left:81.0px;width:101px;text-align:center;top:280px;font-size:14px;line-height:14px;color:#000;font-weight:normal;font-family:'Liberation Serif', serif;-webkit-text-stroke:0;">Joy</div>
<div class="t" style="left:182.5px;width:70px;text-align:center;top:280px;font-size:14px;line-height:14px;color:#000;font-weight:normal;font-family:'Liberation Serif', serif;-webkit-text-stroke:0;">White</div>
<div style="position:absolute;left:308px;top:204px;width:161px;height:108px;background:#fff"></div>
<div style="position:absolute;left:308px;top:204px;width:161px;height:18px;background:#ddebf7"></div>
<div style="position:absolute;left:308px;top:222px;width:161px;height:1px;background:#9bc2e6"></div>
<div style="position:absolute;left:308px;top:294px;width:161px;height:18px;background:#ddebf7"></div>
<div style="position:absolute;left:308px;top:294px;width:161px;height:1px;background:#9bc2e6"></div>
<div class="t" style="left:310.6px;top:210px;font-size:11px;line-height:11px;color:#000;font-weight:bold;font-family:'Liberation Sans', sans-serif;transform:scaleX(0.9391);transform-origin:left;">Row Labels</div>
<div style="position:absolute;left:372px;top:207px;width:13.5px;height:14px;background:#f4f4f4;border:1px solid #c9c9c9;box-sizing:border-box"></div>
<svg style="position:absolute;left:375px;top:212px;" width="8" height="5" viewBox="0 0 8 5"><polygon points="1,1 6,1 3.5,3.8" fill="#707070"/></svg>
<div class="t" style="left:389.4px;top:210px;font-size:11px;line-height:11px;color:#000;font-weight:bold;font-family:'Liberation Sans', sans-serif;transform:scaleX(0.9821);transform-origin:left;">Count of Color</div>
<div class="t" style="left:310.6px;top:228px;font-size:11px;line-height:11px;color:#111;font-weight:normal;font-family:'Liberation Sans', sans-serif;">Joy</div>
<div class="t" style="right:248.5px;top:228px;font-size:11px;line-height:11px;color:#111;font-weight:normal;font-family:'Liberation Sans', sans-serif;">1</div>
<div class="t" style="left:310.6px;top:246px;font-size:11px;line-height:11px;color:#111;font-weight:normal;font-family:'Liberation Sans', sans-serif;">Ravi</div>
<div class="t" style="right:248.5px;top:246px;font-size:11px;line-height:11px;color:#111;font-weight:normal;font-family:'Liberation Sans', sans-serif;">1</div>
<div class="t" style="left:310.6px;top:264px;font-size:11px;line-height:11px;color:#111;font-weight:normal;font-family:'Liberation Sans', sans-serif;">Rita</div>
<div class="t" style="right:248.5px;top:264px;font-size:11px;line-height:11px;color:#111;font-weight:normal;font-family:'Liberation Sans', sans-serif;">1</div>
<div class="t" style="left:310.6px;top:282px;font-size:11px;line-height:11px;color:#111;font-weight:normal;font-family:'Liberation Sans', sans-serif;">Roy</div>
<div class="t" style="right:248.5px;top:282px;font-size:11px;line-height:11px;color:#111;font-weight:normal;font-family:'Liberation Sans', sans-serif;">1</div>
<div class="t" style="left:310.6px;top:300px;font-size:11px;line-height:11px;color:#000;font-weight:bold;font-family:'Liberation Sans', sans-serif;transform:scaleX(0.9916);transform-origin:left;">Grand Total</div>
<div class="t" style="right:248.5px;top:300px;font-size:11px;line-height:11px;color:#000;font-weight:bold;font-family:'Liberation Sans', sans-serif;">4</div>
<div style="position:absolute;left:2px;top:430px;width:710px;height:26px;background:#2e2e2e"></div>
<div style="position:absolute;left:694px;top:186px;width:18px;height:244px;background:#2e2e2e"></div>
<div style="position:absolute;left:696px;top:188px;width:15px;height:243px;background:#383838;border-radius:7px"></div>
<svg style="position:absolute;left:697px;top:190px;" width="12" height="9" viewBox="0 0 12 9"><polygon points="6.5,2 10.5,7.8 2.5,7.8" fill="#c4c4c4" stroke="#c4c4c4" stroke-width="0.6" stroke-linejoin="round"/></svg>
<div style="position:absolute;left:699.5px;top:202px;width:8px;height:134px;background:#c4c4c4;border-radius:4px"></div>
<svg style="position:absolute;left:697px;top:420px;" width="12" height="9" viewBox="0 0 12 9"><polygon points="2.5,1.8 10.5,1.8 6.5,7.5" fill="#c4c4c4" stroke="#c4c4c4" stroke-width="0.6" stroke-linejoin="round"/></svg>
<div style="position:absolute;left:2px;top:430px;width:710px;height:26px;background:#2e2e2e"></div>
<div style="position:absolute;left:90px;top:430px;width:70px;height:8px;background:#fff"></div>
<div style="position:absolute;left:2px;top:430px;width:98px;height:26px;background:#2e2e2e;border-radius:0 6px 0 0"></div>
<div style="position:absolute;left:150px;top:430px;width:562px;height:26px;background:#2e2e2e;border-radius:6px 0 0 0"></div>
<svg style="position:absolute;left:21px;top:437px;" width="10" height="12" viewBox="0 0 10 12"><polyline points="7.5,1.5 2.5,6 7.5,10.5" fill="none" stroke="#a8a8a8" stroke-width="1.2"/></svg>
<svg style="position:absolute;left:50px;top:437px;" width="10" height="12" viewBox="0 0 10 12"><polyline points="2.5,1.5 7.5,6 2.5,10.5" fill="none" stroke="#a8a8a8" stroke-width="1.2"/></svg>
<div style="position:absolute;left:100px;top:428px;width:50px;height:26.5px;background:#fff;border-radius:0 0 5px 5px"></div>
<div class="t" style="left:107px;top:436px;font-size:12.5px;line-height:12.5px;color:#222;font-weight:normal;font-family:'Liberation Sans', sans-serif;transform:scaleX(0.8960);transform-origin:left;">Sheet1</div>
<div style="position:absolute;left:107px;top:450.5px;width:36px;height:2px;background:#1e7e45"></div>
<div style="position:absolute;left:153.5px;top:434.5px;width:1px;height:17.5px;background:#6a6a6a"></div>
<svg style="position:absolute;left:188px;top:436px;" width="14" height="14" viewBox="0 0 14 14"><path d="M7 1 V13 M1 7 H13" stroke="#e0e0e0" stroke-width="1.3"/></svg>
<div style="position:absolute;left:430px;top:439px;width:2px;height:2px;background:#d6d6d6"></div>
<div style="position:absolute;left:430px;top:442.5px;width:2px;height:2px;background:#d6d6d6"></div>
<div style="position:absolute;left:430px;top:446px;width:2px;height:2px;background:#d6d6d6"></div>
<div style="position:absolute;left:444.5px;top:436px;width:252px;height:14.5px;background:#3a3a3a;border-radius:7px"></div>
<svg style="position:absolute;left:447px;top:439px;" width="10" height="10" viewBox="0 0 10 10"><polygon points="1.5,5 8.5,1 8.5,9" fill="#bdbdbd"/></svg>
<div style="position:absolute;left:459.5px;top:439px;width:204px;height:8.5px;background:#bcbcbc;border-radius:4px"></div>
<svg style="position:absolute;left:684px;top:439px;" width="10" height="10" viewBox="0 0 10 10"><polygon points="8.5,5 1.5,1 1.5,9" fill="#bdbdbd"/></svg>
<div style="position:absolute;left:2px;top:457px;width:710px;height:19px;background:#353535"></div>
<div class="t" style="left:8.7px;top:463px;font-size:9.5px;line-height:9.5px;color:#e0e0e0;font-weight:normal;font-family:'Liberation Sans', sans-serif;transform:scaleX(0.8958);transform-origin:left;">Ready</div>
<div class="t" style="left:47.8px;top:463px;font-size:9.5px;line-height:9.5px;color:#e0e0e0;font-weight:normal;font-family:'Liberation Sans', sans-serif;transform:scaleX(0.9369);transform-origin:left;">Sheet 1 of 1</div>
<div class="t" style="left:109.8px;top:463px;font-size:9.5px;line-height:9.5px;color:#e0e0e0;font-weight:normal;font-family:'Liberation Sans', sans-serif;transform:scaleX(0.9454);transform-origin:left;">Workbook Statistics</div>
<svg style="position:absolute;left:205px;top:461px;" width="15" height="13" viewBox="0 0 15 13"><g fill="none" stroke="#d0d0d0" stroke-width="1"><rect x="1.5" y="1.5" width="12" height="9"/><line x1="1" y1="4" x2="14" y2="4"/></g><circle cx="10" cy="9" r="3.2" fill="#333" stroke="#d0d0d0" stroke-width="1.1"/><circle cx="10" cy="9" r="1.2" fill="#d0d0d0"/></svg>
<svg style="position:absolute;left:233px;top:461px;" width="15" height="13" viewBox="0 0 15 13"><g fill="none" stroke="#d8d8d8" stroke-width="1.1"><circle cx="6" cy="2.5" r="1.6"/><path d="M1.5 4.5 L6 6 L10.5 4.5 M6 6 V9 L3 12.5 M6 9 L8 11.5"/><polyline points="8,10.5 10,12.5 14,7"/></g></svg>
<div class="t" style="left:248.5px;top:463px;font-size:9.5px;line-height:9.5px;color:#e0e0e0;font-weight:normal;font-family:'Liberation Sans', sans-serif;transform:scaleX(0.9690);transform-origin:left;">Accessibility: Good to go</div>
<div style="position:absolute;left:480px;top:457.5px;width:35px;height:17px;background:#3e3e3e"></div>
<svg style="position:absolute;left:490px;top:460px;" width="14" height="14" viewBox="0 0 14 14"><g fill="none" stroke="#ececec" stroke-width="1.4"><rect x="1.2" y="1.2" width="11.6" height="11.3"/><line x1="5.1" y1="1" x2="5.1" y2="12.8"/><line x1="8.9" y1="1" x2="8.9" y2="12.8"/><line x1="1" y1="5" x2="13" y2="5"/><line x1="1" y1="8.7" x2="13" y2="8.7"/></g></svg>
<svg style="position:absolute;left:525px;top:460px;" width="14" height="14" viewBox="0 0 14 14"><g fill="none" stroke="#dcdcdc" stroke-width="1.3"><rect x="1.2" y="1.2" width="11.6" height="11.3"/><rect x="4.2" y="3.6" width="5.6" height="6.5"/><line x1="4" y1="6.8" x2="10" y2="6.8"/></g></svg>
<svg style="position:absolute;left:560px;top:460px;" width="14" height="14" viewBox="0 0 14 14"><g fill="none" stroke="#dcdcdc" stroke-width="1.3"><rect x="1.2" y="1.2" width="11.6" height="11.3"/><path d="M4.3 1 V6.8 H13"/><line x1="7.6" y1="1" x2="7.6" y2="6.8"/></g></svg>
<div style="position:absolute;left:589px;top:466px;width:7px;height:1.2px;background:#bdbdbd"></div>
<div style="position:absolute;left:600.5px;top:467px;width:86px;height:1px;background:#a0a0a0"></div>
<div style="position:absolute;left:641.5px;top:462px;width:5px;height:10px;background:#c8c8c8"></div>
<svg style="position:absolute;left:690px;top:462px;" width="10" height="10" viewBox="0 0 10 10"><path d="M4.8 1 V9 M1 5 H9" stroke="#d0d0d0" stroke-width="1.1"/></svg>
</body></html>
